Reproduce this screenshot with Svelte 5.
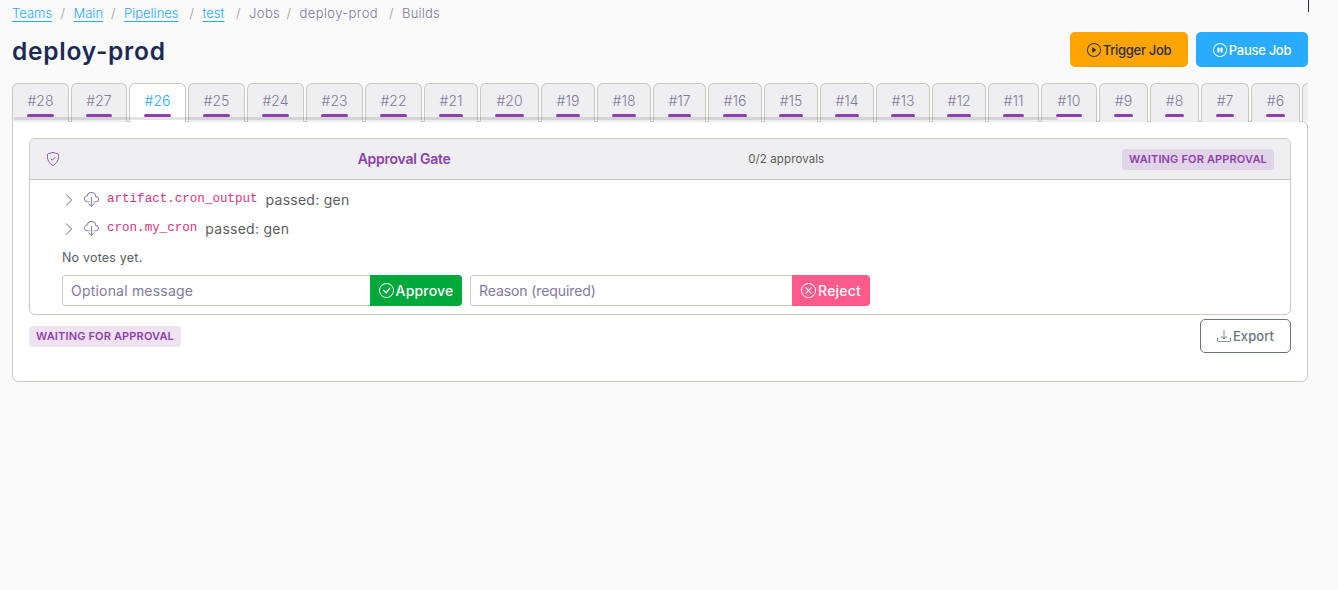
<script>
  const crumbs = [
    { label: 'Teams', href: '#teams', width: 40 },
    { label: 'Main', href: '#main', width: 29 },
    { label: 'Pipelines', href: '#pipelines', width: 57 },
    { label: 'test', href: '#test', width: 25 },
    { label: 'Jobs', width: 29 },
    { label: 'deploy-prod', width: 81 },
    { label: 'Builds', width: 38 }
  ];

  // tab widths in px, newest build first
  const builds = [
    [28, 57], [27, 56], [26, 57], [25, 57], [24, 57], [23, 57], [22, 57], [21, 54],
    [20, 59], [19, 54], [18, 54], [17, 53], [16, 54], [15, 54], [14, 54], [13, 54],
    [12, 54], [11, 51], [10, 56], [9, 49], [8, 49], [7, 48], [6, 49]
  ].map(([number, width]) => ({ number, width }));

  const inputs = [
    { name: 'artifact.cron_output', passed: 'gen' },
    { name: 'cron.my_cron', passed: 'gen' }
  ];

  const circle = 'M8 15A7 7 0 1 1 8 1a7 7 0 0 1 0 14m0 1A8 8 0 1 0 8 0a8 8 0 0 0 0 16';

  const icons = {
    play: [circle, 'M6.271 5.055a.5.5 0 0 1 .52.038l3.5 2.5a.5.5 0 0 1 0 .814l-3.5 2.5A.5.5 0 0 1 6 10.5v-5a.5.5 0 0 1 .271-.445'],
    pause: [circle, 'M5 6.25a1.25 1.25 0 1 1 2.5 0v3.5a1.25 1.25 0 1 1-2.5 0zm3.5 0a1.25 1.25 0 1 1 2.5 0v3.5a1.25 1.25 0 1 1-2.5 0z'],
    check: [circle, 'm10.97 4.97-.02.022-3.473 4.425-2.093-2.094a.75.75 0 0 0-1.06 1.06L6.97 11.03a.75.75 0 0 0 1.079-.02l3.992-4.99a.75.75 0 0 0-1.071-1.05'],
    cross: [circle, 'M4.646 4.646a.5.5 0 0 1 .708 0L8 7.293l2.646-2.647a.5.5 0 0 1 .708.708L8.707 8l2.647 2.646a.5.5 0 0 1-.708.708L8 8.707l-2.646 2.647a.5.5 0 0 1-.708-.708L7.293 8 4.646 5.354a.5.5 0 0 1 0-.708'],
    chevron: ['M4.646 1.646a.5.5 0 0 1 .708 0l6 6a.5.5 0 0 1 0 .708l-6 6a.5.5 0 0 1-.708-.708L10.293 8 4.646 2.354a.5.5 0 0 1 0-.708'],
    cloud: [
      'M4.406 1.342A5.53 5.53 0 0 1 8 0c2.69 0 4.923 2 5.166 4.579C14.758 4.804 16 6.137 16 7.773 16 9.569 14.502 11 12.687 11H10a.5.5 0 0 1 0-1h2.688C13.979 10 15 8.988 15 7.773c0-1.216-1.02-2.228-2.313-2.228h-.5v-.5C12.188 2.825 10.328 1 8 1a4.53 4.53 0 0 0-2.941 1.1c-.757.652-1.153 1.438-1.153 2.055v.448l-.445.049C2.064 4.805 1 5.952 1 7.318 1 8.785 2.23 10 3.781 10H6a.5.5 0 0 1 0 1H3.781C1.708 11 0 9.366 0 7.318c0-1.763 1.266-3.223 2.942-3.593.143-.863.698-1.723 1.464-2.383',
      'M7.646 15.854a.5.5 0 0 0 .708 0l3-3a.5.5 0 0 0-.708-.708L8.5 14.293V5.5a.5.5 0 0 0-1 0v8.793l-2.146-2.147a.5.5 0 0 0-.708.708z'
    ],
    download: [
      'M.5 9.9a.5.5 0 0 1 .5.5v2.5a1 1 0 0 0 1 1h12a1 1 0 0 0 1-1v-2.5a.5.5 0 0 1 1 0v2.5a2 2 0 0 1-2 2H2a2 2 0 0 1-2-2v-2.5a.5.5 0 0 1 .5-.5',
      'M7.646 11.854a.5.5 0 0 0 .708 0l3-3a.5.5 0 0 0-.708-.708L8.5 10.293V1.5a.5.5 0 0 0-1 0v8.793L5.354 8.146a.5.5 0 1 0-.708.708z'
    ]
  };

  let current = $state(26);
  let message = $state('');
  let reason = $state('');
</script>

{#snippet icon(name, size)}
  <svg width={size} height={size} viewBox="0 0 16 16" fill="currentColor" aria-hidden="true">
    {#each icons[name] as d}
      <path {d} />
    {/each}
  </svg>
{/snippet}

<div class="page">
  <span class="edge-mark"></span>

  <nav class="breadcrumb">
    {#each crumbs as crumb, i}
      {#if i > 0}<span class="slash">/</span>{/if}
      <span class="crumb" class:plain={!crumb.href} style="width: {crumb.width}px">
        {#if crumb.href}<a href={crumb.href}>{crumb.label}</a>{:else}{crumb.label}{/if}
      </span>
    {/each}
  </nav>

  <header class="title-row">
    <h1>deploy-prod</h1>
    <div class="actions">
      <button class="btn trigger">{@render icon('play', 14)}<span>Trigger Job</span></button>
      <button class="btn pause">{@render icon('pause', 14)}<span>Pause Job</span></button>
    </div>
  </header>

  <div class="tabs">
    {#each builds as build}
      <button
        class="tab"
        class:active={build.number === current}
        style="width: {build.width}px"
        onclick={() => (current = build.number)}
      >
        <span class="number">#{build.number}</span>
        <span class="status"></span>
      </button>
    {/each}
    <span class="tab more"></span>
    <span class="thumb"></span>
  </div>

  <main class="panel">
    <section class="gate">
      <div class="gate-header">
        <svg class="shield" width="14" height="14" viewBox="0 0 16 16" fill="none" stroke="currentColor" stroke-linecap="round" stroke-linejoin="round" aria-hidden="true">
          <path d="M8 .6c-1.2.2-3.8.9-5.6 1.5a.9.9 0 0 0-.7.8c-.7 5.8 2 10.4 6.3 12.5 4.3-2.1 7-6.7 6.3-12.5a.9.9 0 0 0-.7-.8C11.8 1.5 9.2.8 8 .6z" />
          <path d="M5.6 7.8l1.6 1.6 3.2-3.2" />
        </svg>
        <strong>Approval Gate</strong>
        <span class="count">0/2 approvals</span>
        <span class="badge">WAITING FOR APPROVAL</span>
      </div>

      <div class="gate-body">
        {#each inputs as input}
          <div class="input-row">
            <span class="chevron">{@render icon('chevron', 14)}</span>
            <span class="cloud">{@render icon('cloud', 15)}</span>
            <code>{input.name}</code>
            <span class="passed">passed: {input.passed}</span>
          </div>
        {/each}

        <p class="votes">No votes yet.</p>

        <div class="forms">
          <div class="group approve">
            <input placeholder="Optional message" bind:value={message} />
            <button>{@render icon('check', 15)}<span>Approve</span></button>
          </div>
          <div class="group reject">
            <input placeholder="Reason (required)" bind:value={reason} />
            <button>{@render icon('cross', 15)}<span>Reject</span></button>
          </div>
        </div>
      </div>
    </section>

    <footer>
      <span class="badge">WAITING FOR APPROVAL</span>
      <button class="export">{@render icon('download', 14)}<span>Export</span></button>
    </footer>
  </main>
</div>

<style>
  :global(body) {
    margin: 0;
    background: #fafafa;
  }

  .page {
    position: relative;
    width: 1296px;
    height: 590px;
    padding: 0 12px;
    font-family: Inter, 'Open Sans', sans-serif;
    font-size: 14px;
    color: #5b5d61;
  }

  .page * { box-sizing: border-box; }
  svg { display: block; flex: none; }
  button, input { font-family: inherit; margin: 0; }

  .edge-mark {
    position: absolute;
    top: 0;
    right: 11px;
    width: 1px;
    height: 12px;
    background: #1b2a55;
  }

  .breadcrumb {
    display: flex;
    align-items: center;
    height: 26px;
    font-size: 13px;
    font-weight: 300;
    color: #8378a0;
    white-space: nowrap;
  }

  .crumb { flex: none; }
  .crumb.plain { letter-spacing: 0.4px; }
  .crumb.plain:last-child { letter-spacing: 0.2px; }
  .crumb a { color: #29abff; text-decoration: underline; text-underline-offset: 3px; }
  .slash { width: 21.5px; text-align: center; color: #999; }

  .title-row {
    display: flex;
    justify-content: space-between;
    align-items: flex-start;
    height: 57px;
    padding-top: 6px;
  }

  h1 {
    margin: 0;
    font-size: 24.5px;
    line-height: 38px;
    font-weight: 600;
    letter-spacing: 0.75px;
    color: #1b2a55;
  }

  .actions { display: flex; gap: 8px; }

  .btn {
    display: flex;
    align-items: center;
    justify-content: center;
    gap: 2px;
    height: 35px;
    padding: 0;
    border: 0;
    border-radius: 5px;
    font-size: 13px;
    font-weight: 500;
    letter-spacing: -0.3px;
  }

  .trigger { width: 118px; background: #ffa503; color: #2b2f40; }
  .pause { width: 112px; background: #29abff; color: #fff; }

  .tabs {
    position: relative;
    z-index: 1;
    display: flex;
    gap: 2px;
    height: 39px;
    overflow: hidden;
  }

  .tab {
    display: flex;
    flex-direction: column;
    flex: none;
    padding: 9px 14px 0;
    border: 1px solid #cbc8c0;
    border-bottom: 0;
    border-radius: 6px 6px 0 0;
    background: #efeff2;
    font-size: 14px;
    font-weight: 300;
    color: #8378a0;
  }

  .tab.active { background: #fff; color: #29abff; }
  .tab.more { width: 49px; }
  .number { line-height: 16px; height: 21px; align-self: center; }
  .status { height: 3px; border-radius: 2px; background: #8e3fae; }

  .thumb {
    position: absolute;
    left: 2px;
    top: 34px;
    width: 1044px;
    height: 3px;
    border-radius: 2px;
    background: rgba(0, 0, 0, 0.11);
  }

  .panel {
    height: 261px;
    margin-top: -1px;
    padding: 16px;
    background: #fff;
    border: 1px solid #cbc8c0;
    border-radius: 0 6px 6px 6px;
  }

  .gate {
    height: 177px;
    border: 1px solid #cbc8c0;
    border-radius: 6px;
  }

  .gate-header {
    display: flex;
    align-items: center;
    justify-content: space-between;
    height: 41px;
    padding: 0 16px;
    background: #efeff2;
    border-bottom: 1px solid #cbc8c0;
    border-radius: 5px 5px 0 0;
    color: #8e3fae;
  }

  strong { font-size: 14px; font-weight: 600; letter-spacing: -0.25px; padding-bottom: 2px; }
  .count { font-size: 11.5px; letter-spacing: 0.1px; color: #5c5d60; }

  .badge {
    width: 152px;
    height: 21px;
    border-radius: 4px;
    background: rgba(142, 63, 174, 0.15);
    color: #8e3fae;
    font-size: 11px;
    line-height: 21px;
    font-weight: 600;
    letter-spacing: 0.15px;
    text-align: center;
    white-space: nowrap;
  }

  .gate-body { padding: 5px 32px 0; }

  .input-row {
    display: flex;
    align-items: center;
    height: 29px;
    font-size: 14px;
    letter-spacing: 0.25px;
    white-space: nowrap;
  }

  .chevron, .cloud { color: #8378a0; }
  .chevron { margin-right: 8px; }
  .cloud { margin-right: 8px; }

  code {
    margin-right: 8px;
    font-family: 'Liberation Mono', monospace;
    font-size: 12.55px;
    line-height: 14px;
    padding-bottom: 1px;
    letter-spacing: 0;
    color: #d63384;
  }

  .votes {
    margin: 0;
    height: 32px;
    font-size: 12.5px;
    line-height: 29px;
    letter-spacing: 0.2px;
  }

  .forms { display: flex; gap: 8px; }
  .group { display: flex; height: 31px; width: 400px; }

  input {
    flex: 1;
    min-width: 0;
    padding: 0 8px;
    border: 1px solid #cbc8c0;
    border-right: 0;
    border-radius: 4px 0 0 4px;
    background: #fff;
    font-size: 14px;
    outline: 0;
  }

  input::placeholder { color: #8378a0; opacity: 1; }
  .approve input { letter-spacing: 0.2px; }
  .reject input { letter-spacing: -0.1px; }

  .group button {
    display: flex;
    align-items: center;
    justify-content: center;
    gap: 2px;
    padding: 0;
    border: 0;
    border-radius: 0 4px 4px 0;
    color: #fff;
    font-size: 14px;
    font-weight: 500;
    letter-spacing: 0.2px;
  }

  .approve button { width: 92px; background: #00a83b; }
  .reject button { width: 78px; background: #ff5a8c; }

  footer {
    display: flex;
    justify-content: space-between;
    align-items: center;
    height: 34px;
    margin-top: 4px;
  }

  .export {
    display: flex;
    align-items: center;
    justify-content: center;
    gap: 2px;
    width: 91px;
    height: 34px;
    padding: 0;
    border: 1px solid #6c757d;
    border-radius: 5px;
    background: #fff;
    color: #6c757d;
    font-size: 13px;
    font-weight: 500;
    letter-spacing: 0.1px;
  }
</style>
